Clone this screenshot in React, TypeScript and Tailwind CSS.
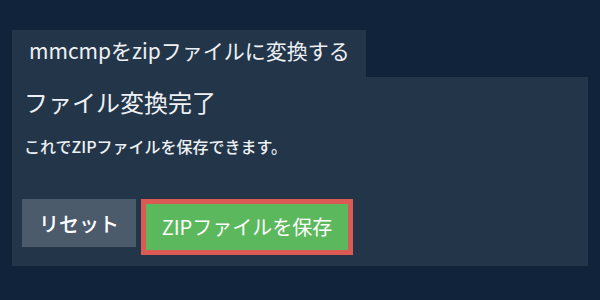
export default function App() {
  return (
    <div className="h-[300px] w-[600px] bg-[#11233a] px-3 pt-[30px] font-['Noto_Sans_CJK_JP',sans-serif] text-[#eef1f4]">
      <div className="flex h-[47px] w-[354px] items-center bg-[#223549] pb-[7px] pl-[17px] text-[21px] leading-none">
        mmcmpをzipファイルに変換する
      </div>
      <div className="h-[189px] bg-[#223549] px-[10px] pt-[9px]">
        <h1 className="pl-[2px] text-[24px] leading-[32px]">ファイル変換完了</h1>
        <p className="mt-[17px] pl-[2px] text-[16px] font-medium leading-[22px]">
          これでZIPファイルを保存できます。
        </p>
        <div className="mt-[42px] flex items-start gap-[5px]">
          <button
            type="button"
            className="flex h-[48px] w-[114px] items-center justify-center bg-[#4b5b6c] pt-[1px] text-[20px] font-medium leading-none text-white"
          >
            リセット
          </button>
          <button
            type="button"
            className="flex h-[56px] w-[212px] items-center justify-center border-[5px] border-[#dc5a55] bg-[#5cb85c] text-[20px] leading-none text-white"
          >
            ZIPファイルを保存
          </button>
        </div>
      </div>
    </div>
  );
}
